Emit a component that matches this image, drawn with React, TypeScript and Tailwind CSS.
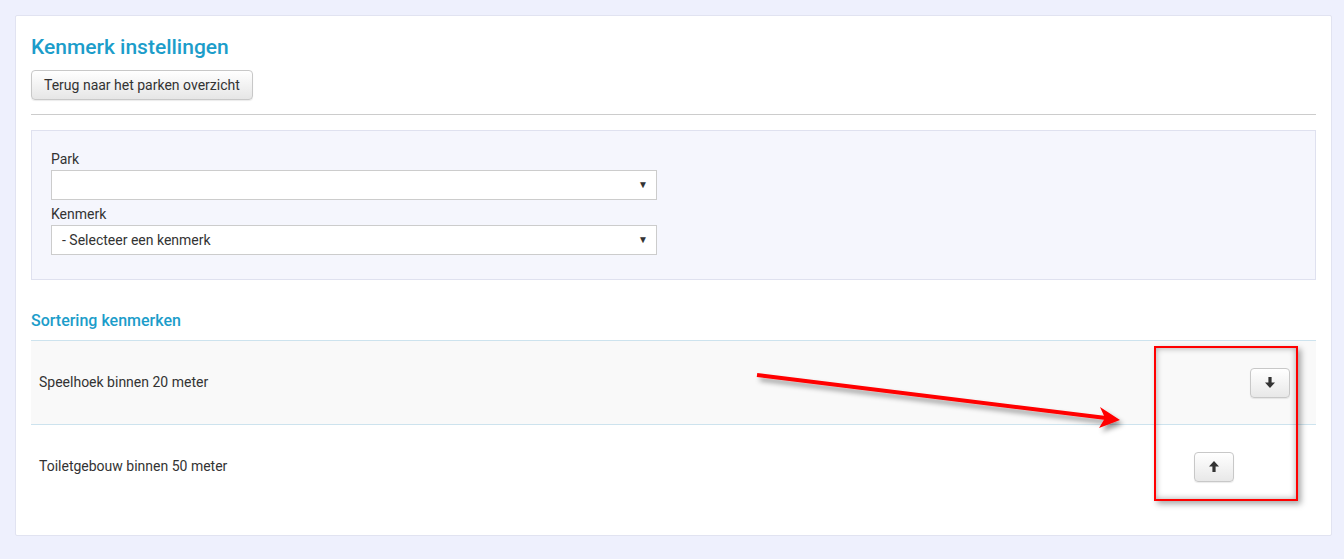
import React from "react";

function ArrowIcon({ dir }: { dir: "up" | "down" }) {
  return (
    <svg width="10" height="11" viewBox="0 0 10 11" className={dir === "up" ? "" : "rotate-180"}>
      <path d="M5 0 L10 5.5 H6.6 V11 H3.4 V5.5 H0 Z" fill="#333" />
    </svg>
  );
}

function SortButton({ dir }: { dir: "up" | "down" }) {
  return (
    <button className="flex h-[30px] w-10 items-center justify-center rounded-[4px] border border-[#c8c8c8] bg-gradient-to-b from-white to-[#e8e8e8] shadow-[0_1px_1px_rgba(0,0,0,0.08)]">
      <ArrowIcon dir={dir} />
    </button>
  );
}

function SelectBox({ value }: { value?: string }) {
  return (
    <div className="flex h-[30px] w-[606px] items-center justify-between border border-[#cccccc] bg-white pl-[10px] pr-[8px] text-[14px] text-[#333]">
      <span>{value}</span>
      <span className="text-[10px] leading-none text-[#333]">▼</span>
    </div>
  );
}

export default function App() {
  return (
    <div className="relative min-h-[559px] bg-[#eef0fd] py-[15px] pl-[15px] pr-[12px] font-['Roboto',sans-serif]">
      <div className="rounded-[2px] border border-[#e1e3f1] bg-white px-[15px] pb-[27px] pt-[16px]">
        <h1 className="text-[21px] font-medium leading-[30px] text-[#1c9dca]">
          Kenmerk instellingen
        </h1>
        <button className="mt-[8px] h-[30px] rounded-[4px] border border-[#c8c8c8] bg-gradient-to-b from-white to-[#e6e6e6] px-[12px] text-[14px] text-[#333] shadow-[0_1px_1px_rgba(0,0,0,0.08)]">
          Terug naar het parken overzicht
        </button>
        <hr className="mt-[14px] border-t border-[#cccccc]" />

        <div className="mt-[15px] border border-[#dfe1ef] bg-[#f5f6fd] px-[19px] pb-[24px] pt-[18px]">
          <label className="block text-[14px] leading-[21px] text-[#333]">Park</label>
          <SelectBox />
          <label className="mt-[4px] block text-[14px] leading-[21px] text-[#333]">Kenmerk</label>
          <SelectBox value="- Selecteer een kenmerk" />
        </div>

        <h2 className="mt-[29px] text-[16px] font-medium leading-[24px] text-[#1c9dca]">
          Sortering kenmerken
        </h2>

        <div className="mt-[7px] border-t border-[#cde3ee]">
          <div className="grid h-[83px] grid-cols-[1fr_56px_56px] items-center bg-[#f9f9f9] pl-[8px] pr-[18px]">
            <span className="text-[14px] text-[#333]">Speelhoek binnen 20 meter</span>
            <span />
            <div className="flex justify-center">
              <SortButton dir="down" />
            </div>
          </div>
          <div className="grid h-[84px] grid-cols-[1fr_56px_56px] items-center border-t border-[#cde3ee] pl-[8px] pr-[18px]">
            <span className="text-[14px] text-[#333]">Toiletgebouw binnen 50 meter</span>
            <div className="flex justify-center">
              <SortButton dir="up" />
            </div>
            <span />
          </div>
        </div>
      </div>

      {/* annotation overlay */}
      <div className="pointer-events-none absolute left-[1154px] top-[346px] h-[155px] w-[144px] border-2 border-[#ff0000] shadow-[inset_0_0_6px_rgba(0,0,0,0.35),3px_3px_6px_rgba(0,0,0,0.35)]" />
      <svg
        className="pointer-events-none absolute left-0 top-0"
        width="1344"
        height="559"
        viewBox="0 0 1344 559"
      >
        <defs>
          <filter id="sh" x="-10%" y="-50%" width="120%" height="200%">
            <feDropShadow dx="3" dy="4" stdDeviation="2.5" floodColor="#000" floodOpacity="0.4" />
          </filter>
        </defs>
        <g filter="url(#sh)">
          <line x1="757" y1="375" x2="1106" y2="418" stroke="#ff0000" strokeWidth="4" />
          <path d="M1120 420 L1100 407 L1105 418 L1099 428 Z" fill="#ff0000" />
        </g>
      </svg>
    </div>
  );
}
